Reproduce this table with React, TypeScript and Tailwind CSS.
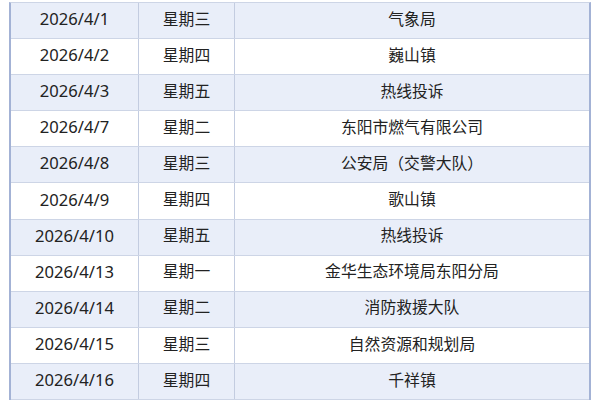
const rows = [
  ["2026/4/1", "星期三", "气象局"],
  ["2026/4/2", "星期四", "巍山镇"],
  ["2026/4/3", "星期五", "热线投诉"],
  ["2026/4/7", "星期二", "东阳市燃气有限公司"],
  ["2026/4/8", "星期三", "公安局（交警大队）"],
  ["2026/4/9", "星期四", "歌山镇"],
  ["2026/4/10", "星期五", "热线投诉"],
  ["2026/4/13", "星期一", "金华生态环境局东阳分局"],
  ["2026/4/14", "星期二", "消防救援大队"],
  ["2026/4/15", "星期三", "自然资源和规划局"],
  ["2026/4/16", "星期四", "千祥镇"],
];

export default function App() {
  return (
    <div
      className="h-[400px] w-[600px] overflow-hidden bg-white pt-[2px]"
      style={{ fontFamily: '"Noto Sans", "Noto Sans CJK SC", sans-serif' }}
    >
      <div className="ml-[9px] w-[582px] border-x-2 border-t border-x-[#a3b2d5] border-t-[#cdd5e6]">
        {rows.map((row, i) => (
          <div
            key={row[0]}
            className={`flex h-[36.1px] items-center border-b border-[#cdd5e6] text-[15.8px] text-[#222] ${
              i % 2 === 0 ? "bg-[#e9eef9]" : "bg-white"
            }`}
          >
            <div className="flex h-full w-[128px] items-center justify-center border-r border-[#c3cce0] pb-[2px] text-[16.6px]">
              {row[0]}
            </div>
            <div className="flex h-full w-[96px] items-center justify-center border-r border-[#c3cce0] pb-[2px]">
              {row[1]}
            </div>
            <div className="flex h-full flex-1 items-center justify-center pb-[2px]">
              {row[2]}
            </div>
          </div>
        ))}
      </div>
    </div>
  );
}
